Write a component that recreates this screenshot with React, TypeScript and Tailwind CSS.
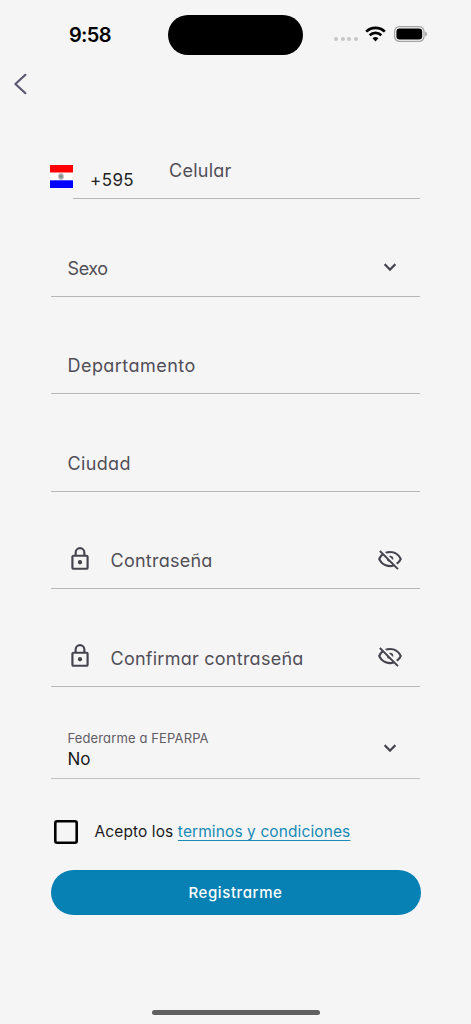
import type { ReactNode } from "react";

function StatusBar() {
  return (
    <header className="grid h-[68px] shrink-0 grid-cols-[168px_135px_1fr] items-center">
      <time className="mt-[2px] pl-[69px] text-[20px] leading-6 font-semibold tracking-[-0.7px] text-black">9:58</time>
      <div className="mt-[2px] h-10 rounded-full bg-black" />
      <div className="flex items-center pl-[31px]">
        <div className="mt-[10px] flex gap-[2.5px]">
          <i className="size-1 rounded-full bg-[#c6c6c7]" />
          <i className="size-1 rounded-full bg-[#c6c6c7]" />
          <i className="size-1 rounded-full bg-[#c6c6c7]" />
          <i className="size-1 rounded-full bg-[#c6c6c7]" />
        </div>
        <svg className="ml-[7.5px]" width="21" height="16" viewBox="0 0 21 16" fill="none" stroke="#000" strokeWidth="2.7">
          <path d="M1.2 5.6a13.3 13.3 0 0 1 18.6 0" />
          <path d="M4.7 9.2a8.3 8.3 0 0 1 11.6 0" />
          <path d="M10.5 15.4 7.5 12.3a4.5 4.5 0 0 1 6 0Z" fill="#000" stroke="none" />
        </svg>
        <svg className="ml-[8px]" width="34" height="16" viewBox="0 0 34 16">
          <rect x="0.6" y="0.6" width="29.4" height="14.8" rx="4.8" fill="none" stroke="#a2a2a2" strokeWidth="1.2" />
          <rect x="2.4" y="2.6" width="25.8" height="10.8" rx="3.2" fill="#000" />
          <path d="M31.2 5.4q1.8.7 1.8 2.6t-1.8 2.6Z" fill="#a2a2a2" />
        </svg>
      </div>
    </header>
  );
}

function Chevron() {
  return (
    <svg width="24" height="24" viewBox="0 0 24 24" fill="#46434e" stroke="#46434e" strokeWidth="0.3">
      <path d="M7.41 8.59 12 13.17l4.59-4.58L18 10l-6 6-6-6z" />
    </svg>
  );
}

function Lock() {
  return (
    <svg width="26" height="26" viewBox="0 0 24 24" fill="#46434e">
      <path d="M12 17a2 2 0 1 1 0-4 2 2 0 0 1 0 4m6 3V10H6v10h12m0-12a2 2 0 0 1 2 2v10a2 2 0 0 1-2 2H6a2 2 0 0 1-2-2V10c0-1.11.9-2 2-2h1V6a5 5 0 0 1 10 0v2h1m-6-5a3 3 0 0 0-3 3v2h6V6a3 3 0 0 0-3-3Z" />
    </svg>
  );
}

function EyeOff() {
  return (
    <svg width="26" height="26" viewBox="0 0 24 24" fill="#46434e">
      <path d="M2 5.27 3.28 4 20 20.72 18.73 22l-3.08-3.08c-1.15.38-2.37.58-3.65.58-5 0-9.27-3.11-11-7.5.69-1.76 1.79-3.31 3.19-4.54L2 5.27M12 9a3 3 0 0 1 3 3 3 3 0 0 1-.17 1L11 9.17A3 3 0 0 1 12 9m0-4.5c5 0 9.27 3.11 11 7.5a11.79 11.79 0 0 1-4 5.19l-1.42-1.43A9.862 9.862 0 0 0 20.82 12 9.821 9.821 0 0 0 12 6.5c-1.09 0-2.16.18-3.16.5L7.3 5.47c1.44-.62 3.03-.97 4.7-.97M3.18 12A9.821 9.821 0 0 0 12 17.5c.69 0 1.37-.07 2-.21L11.72 15A3.064 3.064 0 0 1 9 12.28L5.6 8.87c-.99.85-1.82 1.91-2.42 3.13Z" />
    </svg>
  );
}

function Flag() {
  return (
    <svg width="23" height="23" viewBox="0 0 23 23">
      <path fill="#fff" d="M0 0h23v23H0z" />
      <path fill="#f00" d="M0 0h23v7.5H0z" />
      <path fill="#00f" d="M0 15.3h23V23H0z" />
      <ellipse cx="11" cy="11.4" rx="2.6" ry="3.2" fill="#a9a6a6" stroke="#cfc3d2" strokeWidth="1" />
      <circle cx="11" cy="11.4" r="1.4" fill="#719778" />
    </svg>
  );
}

type FieldProps = {
  label: string;
  height: string;
  tracking: string;
  iconLift?: string;
  leading?: ReactNode;
  trailing?: ReactNode;
};

function Field({ label, height, tracking, iconLift = "pb-px", leading, trailing }: FieldProps) {
  return (
    <div className={`flex items-end border-b border-[#b5b8b6] pr-[17px] pl-[16.5px] pb-[15px] ${height}`}>
      {leading && <span className={`-ml-[0.5px] w-[43.5px] ${iconLift}`}>{leading}</span>}
      <span className={`flex-1 text-[18px] leading-6 whitespace-nowrap text-[#514e58] ${tracking}`}>{label}</span>
      {trailing && <span className={iconLift}>{trailing}</span>}
    </div>
  );
}

export default function App() {
  return (
    <div className="flex h-[1024px] w-[471px] flex-col overflow-hidden bg-[#f5f5f5] font-['Inter',sans-serif] [font-feature-settings:'cv11']">
      <StatusBar />
      <nav className="flex h-[32px] shrink-0 items-center pl-[13px]">
        <svg width="15" height="22" viewBox="0 0 15 22" fill="none" stroke="#5d5774" strokeWidth="2.2" strokeLinecap="round" strokeLinejoin="round">
          <path d="M12.4 1.8 2.4 11l10 9.2" />
        </svg>
      </nav>

      <main className="flex flex-col px-[51px] pt-[2px]">
        <div className="flex h-[97px] items-end">
          <span className="mb-[11px] -ml-px w-[23px] shrink-0">
            <Flag />
          </span>
          <div className="flex flex-1 items-end border-b border-[#b5b8b6]">
            <span className="mb-[6px] w-[96px] pl-[17px] text-[17px] leading-6 tracking-[0.4px] text-[#222]">+595</span>
            <span className="mb-[15px] text-[18px] leading-6 tracking-[0.25px] text-[#514e58]">Celular</span>
          </div>
        </div>
        <Field
          label="Sexo"
          height="h-[98px]"
          tracking="tracking-[-0.4px]"
          iconLift="pb-[2px] pr-px"
          trailing={<Chevron />}
        />
        <Field label="Departamento" height="h-[97px]" tracking="tracking-[0.45px]" />
        <Field label="Ciudad" height="h-[98px]" tracking="tracking-[0.35px]" />
        <Field label="Contraseña" height="h-[97px]" tracking="tracking-[0.25px]" leading={<Lock />} trailing={<EyeOff />} />
        <Field
          label="Confirmar contraseña"
          height="h-[98px]"
          tracking="tracking-[0.25px]"
          iconLift="pb-[2px]"
          leading={<Lock />}
          trailing={<EyeOff />}
        />

        <div className="flex h-[92px] items-end justify-between border-b border-[#c3c5c4] pr-[18px] pl-[16.5px]">
          <div className="mb-[7px] flex flex-col">
            <span className="text-[13px] leading-[18px] tracking-[0.13px] text-[#5f5c66]">Federarme a FEPARPA</span>
            <span className="text-[17px] leading-6 text-[#191919]">No</span>
          </div>
          <span className="mb-[18px]">
            <Chevron />
          </span>
        </div>

        <div className="mt-[41px] flex items-center pl-[3px]">
          <span className="size-6 rounded-[3px] shadow-[inset_0_0_0_2.6px_#000]" />
          <p className="ml-[16.5px] text-[15.5px] leading-6 tracking-[0.1px] whitespace-nowrap text-[#1c1c1e]">
            Acepto los{" "}
            <span className="text-[#178ab5] underline decoration-1 underline-offset-[3px]">terminos y condiciones</span>
          </p>
        </div>

        <button className="mt-[26px] -mr-px flex h-[45px] items-center justify-center rounded-full bg-[#0781b3] pr-px text-[15px] leading-6 font-medium tracking-[0.6px] text-white">
          Registrarme
        </button>
      </main>

      <footer className="mt-auto flex justify-center pb-[9px]">
        <div className="h-[5px] w-[168px] rounded-full bg-[#606060]" />
      </footer>
    </div>
  );
}
